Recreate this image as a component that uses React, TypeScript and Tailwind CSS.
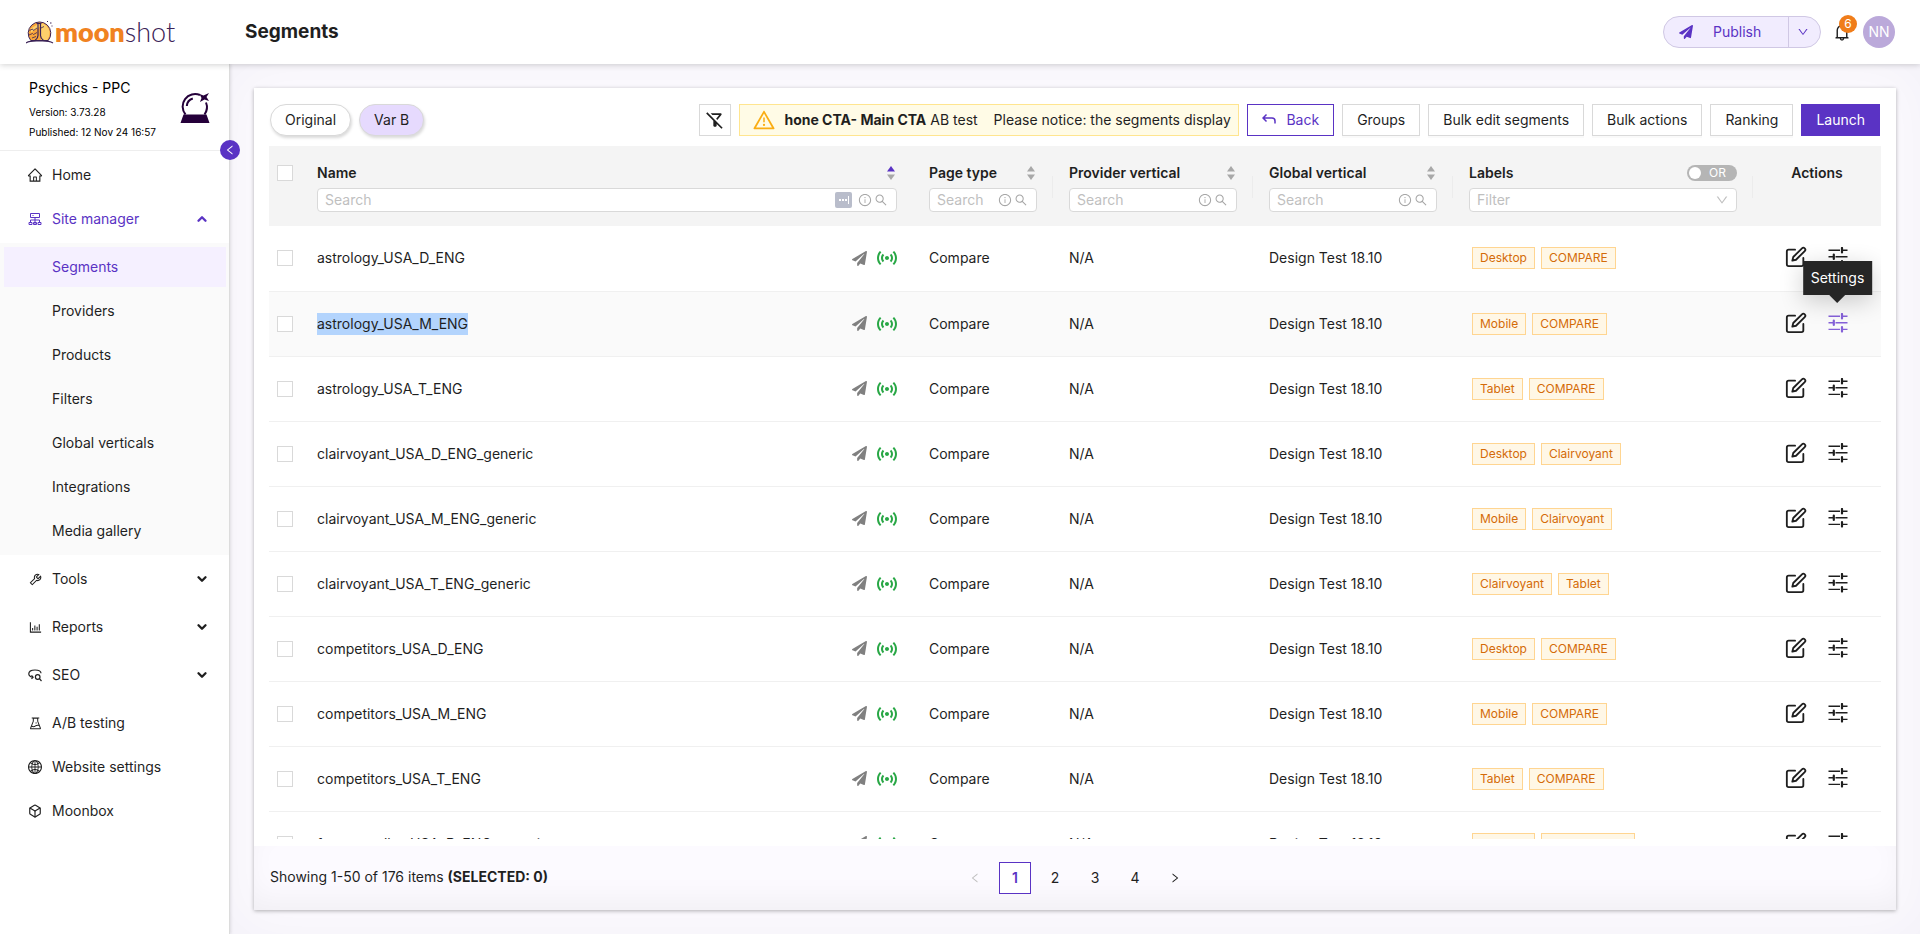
import React, { useState } from 'react';
import {
  AiOutlineBarChart,
  AiOutlineBell,
  AiOutlineDown,
  AiOutlineExperiment,
  AiOutlineGlobal,
  AiOutlineHome,
  AiOutlineInfoCircle,
  AiOutlineLeft,
  AiOutlineRight,
  AiOutlineSearch,
  AiOutlineTool,
  AiOutlineWarning,
} from 'react-icons/ai';
import { FaPaperPlane } from 'react-icons/fa';
import { FiBox, FiChevronDown, FiEdit } from 'react-icons/fi';
import { MdOutlineFilterAltOff, MdSensors } from 'react-icons/md';
import clsx from 'clsx';

const siteManagerItems = [
  `Segments`,
  `Providers`,
  `Products`,
  `Filters`,
  `Global verticals`,
  `Integrations`,
  `Media gallery`,
];

const segments = [
  { name: `astrology_USA_D_ENG`, labels: [`Desktop`, `COMPARE`] },
  { name: `astrology_USA_M_ENG`, labels: [`Mobile`, `COMPARE`] },
  { name: `astrology_USA_T_ENG`, labels: [`Tablet`, `COMPARE`] },
  { name: `clairvoyant_USA_D_ENG_generic`, labels: [`Desktop`, `Clairvoyant`] },
  { name: `clairvoyant_USA_M_ENG_generic`, labels: [`Mobile`, `Clairvoyant`] },
  { name: `clairvoyant_USA_T_ENG_generic`, labels: [`Clairvoyant`, `Tablet`] },
  { name: `competitors_USA_D_ENG`, labels: [`Desktop`, `COMPARE`] },
  { name: `competitors_USA_M_ENG`, labels: [`Mobile`, `COMPARE`] },
  { name: `competitors_USA_T_ENG`, labels: [`Tablet`, `COMPARE`] },
  { name: `fortune_teller_USA_D_ENG_generic`, labels: [`Desktop`, `Fortune Teller`] },
];

const ACTIVE_ROW = 1;

const Logo = () => (
  <a href="#home" className="flex items-center" aria-label="moonshot">
    <svg width="28" height="24" viewBox="0 0 28 24" fill="none" aria-hidden="true">
      <path
        d="M4.8 20.5A11.3 11.3 0 1 1 22.2 20.5Z"
        fill="#f9a63a"
        stroke="#3b2357"
        strokeWidth="1"
      />
      <path d="M15 3c5 1 8.500 5 8.500 10 0 3-1 5-2.500 7h-6Z" fill="#fdd06b" />
      <path d="M5 8.500l8-5 1 3-9 6Z" fill="#fdd06b" />
      <path
        d="M10.500 3.500h5M12 3.500v12c0 2-1 3.500-3 5M14.500 3.500v12c0 2 1 3.500 3 5"
        stroke="#3b2357"
        strokeWidth="1.2"
      />
      <path
        d="M3.500 10.500l3-1.500 1 1.500 3.500-2.500M3 15l3.500-1.500 1 1 3.500-2M6 18l4-1.500M15 8l3-1.500"
        stroke="#3b2357"
        strokeWidth=".8"
      />
      <path d="M0 23c4-2.500 8-2 13.500-2s9-.5 13.500 2" stroke="#3b2357" strokeWidth="1.2" />
      <path d="M24 3h1.500M25.500 6h1M21 1.500h1" stroke="#3b2357" />
    </svg>
    <span className="ml-px font-['Lato',sans-serif] text-[27px] leading-8 font-extrabold text-[#f08221]">
      moon
    </span>
    <span className="font-['Lato',sans-serif] text-[27px] leading-8 font-light text-[#3b2357]">
      shot
    </span>
  </a>
);

const CrystalBall = () => (
  <svg width="30" height="32" viewBox="0 0 30 32" fill="none" aria-hidden="true">
    <path
      d="M5.500 22.500a12.500 12.500 0 0 1 14.500-19.500M26 10.500a12.500 12.500 0 0 1-1.500 12"
      stroke="#25003a"
      strokeWidth="2"
    />
    <path d="M6.800 14a8.500 8.500 0 0 1 6-7.500" stroke="#25003a" strokeWidth="2" />
    <path d="M3.500 22.500h23l3 8.500h-29Z" fill="#25003a" />
    <path d="M19.500 2l4 1.500L29 1l-2.500 4 2.500 4-4.500-1.500L20 10l1.500-4Z" fill="#25003a" />
  </svg>
);

const SiteManagerIcon = () => (
  <svg width="14" height="14" viewBox="0 0 14 14" fill="none" stroke="currentColor" aria-hidden="true">
    <path d="M2.500 1.500h9v4h-9zM7 5.500V13M2.500 10V8h9v2M1 10.500h3v2H1zM5.500 10.500h3v2h-3zM10 10.500h3v2h-3zM4.500 3.500h1" />
  </svg>
);

const SeoIcon = () => (
  <svg width="14" height="14" viewBox="0 0 14 14" fill="none" stroke="currentColor" strokeWidth="1.2" aria-hidden="true">
    <path d="M4.500 9.200C2.200 8.700.8 7.300.8 5.700.8 3.500 3.200 2 7 2s6 1.300 6 3.200" />
    <circle cx="9.700" cy="9" r="2.300" />
    <path d="M11.400 10.700l2.100 2.300M3.500 7.300l1.600 1.900-1.600 1.600" />
  </svg>
);

const BackIcon = () => (
  <svg width="14" height="14" viewBox="0 0 14 14" fill="none" stroke="currentColor" strokeWidth="1.5" aria-hidden="true">
    <path d="M4.500 1.500L1 5l3.500 3.500M1 5h9a3 3 0 0 1 3 3v2.500" />
  </svg>
);

const SlidersIcon = () => (
  <svg width="20" height="20" viewBox="0 0 20 20" fill="none" stroke="currentColor" aria-hidden="true">
    <path
      d="M.5 3.200h11.500M14 3.200h5.500M.5 9.800h5M7.500 9.800h12M.5 16.400h11.500M14 16.400h5.500"
      strokeWidth="1.4"
    />
    <path
      d="M14 1v4.400M5.800 7.600V12M14 14.200v4.400"
      strokeWidth="2.200"
      strokeLinecap="round"
    />
  </svg>
);

const Sorter = ({ active = false }) => (
  <svg width="10" height="14" viewBox="0 0 10 14" aria-hidden="true">
    <path d="M5 0l4 5.500H1z" fill={active ? `#5a33c4` : `#a8a8a8`} />
    <path d="M5 14l4-5.500H1z" fill="#a8a8a8" />
  </svg>
);

const Header = () => (
  <header className="relative z-20 flex h-16 shrink-0 items-center bg-white pr-[25px] pl-[26px] shadow-[0_1px_6px_rgba(0,0,0,0.18)]">
    <div className="w-[219px] shrink-0">
      <Logo />
    </div>
    <h1 className="flex-1 text-[19px] font-bold">Segments</h1>
    <div className="flex h-8 overflow-hidden rounded-full border border-[#d0c8e4] bg-[#f1ecfe] text-[#5a33c4]">
      <button type="button" className="flex w-[124px] items-center pl-[15px]">
        <FaPaperPlane size={14} />
        <span className="ml-5">Publish</span>
      </button>
      <button
        type="button"
        aria-label="More publish options"
        className="flex w-8 items-center border-l border-[#d0c8e4] pl-2"
      >
        <AiOutlineDown size={12} />
      </button>
    </div>
    <button type="button" aria-label="Notifications" className="relative ml-2.5 p-px">
      <AiOutlineBell size={20} />
      <span className="absolute -top-1.5 left-2 flex size-[18px] items-center justify-center rounded-full bg-[#f07d1a] text-xs leading-none text-white">
        6
      </span>
    </button>
    <span className="ml-2.5 flex size-8 items-center justify-center rounded-full bg-[#bba9da] text-white">
      NN
    </span>
  </header>
);

const menuItem = `flex h-10 w-full items-center gap-[9px] pr-5 pl-[27px] text-left`;

const MenuIcon = ({ children }: { children: React.ReactNode }) => (
  <span className="flex w-4 justify-center">{children}</span>
);

const Sidebar = () => {
  const [open, setOpen] = useState(true);

  return (
    <aside className="relative z-10 flex w-[230px] shrink-0 flex-col border-r border-[#dcdcdc] bg-white shadow-[1px_0_3px_rgba(0,0,0,0.1)]">
      <div className="flex h-[87px] items-start justify-between border-b border-[#eeeeee] pt-3 pr-[19px] pl-[29px] text-black">
        <div>
          <p className="leading-6">Psychics - PPC</p>
          <p className="mt-0.5 text-[10px] leading-5">Version: 3.73.28</p>
          <p className="text-[10px] leading-5">Published: 12 Nov 24 16:57</p>
        </div>
        <div className="pt-4">
          <CrystalBall />
        </div>
      </div>
      <button
        type="button"
        aria-label="Collapse menu"
        className="absolute top-[76px] -right-[11px] flex size-5 items-center justify-center rounded-full bg-[#5a33c4] text-white"
      >
        <AiOutlineLeft size={12} />
      </button>
      <nav aria-label="Main">
        <a href="#home" className={clsx(menuItem, `mt-1`)}>
          <MenuIcon>
            <AiOutlineHome size={16} />
          </MenuIcon>
          Home
        </a>
        <button
          type="button"
          onClick={() => setOpen(!open)}
          className={clsx(menuItem, `my-1 text-[#5a33c4]`)}
        >
          <MenuIcon>
            <SiteManagerIcon />
          </MenuIcon>
          <span className="flex-1">Site manager</span>
          <FiChevronDown size={14} strokeWidth={4} className={clsx(open && `rotate-180`)} />
        </button>
        {open && (
          <div className="flex flex-col gap-1 bg-[#fafafa] py-1">
            {siteManagerItems.map((item, i) => (
              <a
                key={item}
                href={`#${item}`}
                className={clsx(
                  `mr-[3px] ml-1 flex h-10 items-center pl-12`,
                  i === 0 && `bg-[#f5f0ff] text-[#5a33c4]`
                )}
              >
                {item}
              </a>
            ))}
          </div>
        )}
        <button type="button" className={clsx(menuItem, `my-1`)}>
          <MenuIcon>
            <AiOutlineTool size={15} />
          </MenuIcon>
          <span className="flex-1">Tools</span>
          <FiChevronDown size={14} strokeWidth={4} />
        </button>
        <button type="button" className={clsx(menuItem, `my-2`)}>
          <MenuIcon>
            <AiOutlineBarChart size={15} />
          </MenuIcon>
          <span className="flex-1">Reports</span>
          <FiChevronDown size={14} strokeWidth={4} />
        </button>
        <button type="button" className={clsx(menuItem, `my-2`)}>
          <MenuIcon>
            <SeoIcon />
          </MenuIcon>
          <span className="flex-1">SEO</span>
          <FiChevronDown size={14} strokeWidth={4} />
        </button>
        <a href="#ab-testing" className={menuItem}>
          <MenuIcon>
            <AiOutlineExperiment size={15} />
          </MenuIcon>
          A/B testing
        </a>
        <a href="#website-settings" className={clsx(menuItem, `my-1`)}>
          <MenuIcon>
            <AiOutlineGlobal size={16} />
          </MenuIcon>
          Website settings
        </a>
        <a href="#moonbox" className={menuItem}>
          <MenuIcon>
            <FiBox size={14} />
          </MenuIcon>
          Moonbox
        </a>
      </nav>
    </aside>
  );
};

const ToolbarButton = ({ children }: { children: React.ReactNode }) => (
  <button
    type="button"
    className="h-8 shrink-0 border border-[#d9d9d9] bg-white px-3.5 shadow-[0_2px_0_rgba(0,0,0,0.02)]"
  >
    {children}
  </button>
);

const Toolbar = () => (
  <div className="mx-px flex h-8 items-center gap-2">
    <button
      type="button"
      className="h-8 rounded-full border border-[#d9d9d9] bg-white px-3.5 shadow-[1px_2px_3px_rgba(0,0,0,0.15)]"
    >
      Original
    </button>
    <button
      type="button"
      className="h-8 rounded-full border border-[#d9d9d9] bg-[#e6dafe] px-3.5 shadow-[1px_2px_3px_rgba(0,0,0,0.15)]"
    >
      Var B
    </button>
    <div className="flex-1" />
    <button
      type="button"
      aria-label="Clear filters"
      className="flex size-8 items-center justify-center border border-[#d9d9d9]"
    >
      <MdOutlineFilterAltOff size={20} />
    </button>
    <div
      role="alert"
      className="flex h-8 w-[500px] items-center border border-[#ffe58f] bg-[#fffbe6] pr-1 pl-3"
    >
      <AiOutlineWarning size={24} className="shrink-0 text-[#faad14]" />
      <p className="ml-2 flex-1 overflow-hidden whitespace-nowrap">
        <strong className="font-bold">hone CTA- Main CTA</strong> AB test
        <span className="ml-4">Please notice: the segments display</span>
      </p>
    </div>
    <button
      type="button"
      className="flex h-8 items-center border border-[#5a33c4] px-3.5 text-[#5a33c4]"
    >
      <BackIcon />
      <span className="ml-2.5">Back</span>
    </button>
    <ToolbarButton>Groups</ToolbarButton>
    <ToolbarButton>Bulk edit segments</ToolbarButton>
    <ToolbarButton>Bulk actions</ToolbarButton>
    <ToolbarButton>Ranking</ToolbarButton>
    <button type="button" className="h-8 bg-[#5a33c4] px-[15px] text-white">
      Launch
    </button>
  </div>
);

const Checkbox = ({ label }: { label: string }) => (
  <input
    type="checkbox"
    aria-label={label}
    className="block size-4 appearance-none border border-[#d9d9d9] bg-white checked:bg-[#5a33c4]"
  />
);

const SearchBox = ({ label, regex = false }: { label: string; regex?: boolean }) => (
  <div className="flex h-6 items-center rounded border border-[#d9d9d9] bg-white px-[7px] font-normal">
    <input
      type="text"
      aria-label={`Search ${label}`}
      placeholder="Search"
      className="w-0 min-w-0 flex-1 outline-none placeholder:text-[#bfbfbf]"
    />
    {regex && (
      <span className="mr-1.5 flex h-4 w-[17px] items-center justify-center gap-px rounded-xs bg-[#b9bdcb]">
        <i className="size-0.5 bg-white" />
        <i className="size-0.5 bg-white" />
        <i className="size-0.5 bg-white" />
        <i className="h-2 w-px bg-white" />
      </span>
    )}
    <span className="flex gap-0.5 pr-px text-[#a6a6a6]">
      <AiOutlineInfoCircle size={14} />
      <AiOutlineSearch size={14} />
    </span>
  </div>
);

const SearchHeader = ({
  label,
  active = false,
  divider = true,
}: {
  label: string;
  active?: boolean;
  divider?: boolean;
}) => (
  <th className="relative px-4 pt-4 pb-3.5 align-top font-semibold">
    <div className="mb-1 flex h-[22px] items-center justify-between pr-px">
      {label}
      <Sorter active={active} />
    </div>
    <SearchBox label={label} regex={active} />
    {divider && <i className="absolute top-[30px] right-0 h-[22px] w-px bg-[#ececec]" />}
  </th>
);

const Columns = () => (
  <colgroup>
    <col className="w-8" />
    <col />
    <col className="w-[140px]" />
    <col className="w-[200px]" />
    <col className="w-[200px]" />
    <col className="w-[300px]" />
    <col className="w-32" />
  </colgroup>
);

const SegmentsTable = () => (
  <div className="mt-2.5 min-h-0 flex-1 overflow-hidden">
    <table className="w-full table-fixed text-left">
      <Columns />
      <thead className="h-20 bg-[#f4f4f4]">
        <tr>
          <th className="pt-[19px] pl-2 align-top">
            <Checkbox label="Select all" />
          </th>
          <SearchHeader label="Name" active divider={false} />
          <SearchHeader label="Page type" />
          <SearchHeader label="Provider vertical" />
          <SearchHeader label="Global vertical" />
          <th className="relative px-4 pt-4 pb-3.5 align-top font-semibold">
            <div className="mb-1 flex h-[22px] items-center justify-between">
              <span id="labels-heading">Labels</span>
              <button
                type="button"
                role="switch"
                aria-checked="false"
                aria-label="Match all labels"
                className="flex h-4 w-[50px] items-center rounded-full bg-[#b5b5b5] pl-0.5 text-xs font-normal text-white"
              >
                <i className="size-3 rounded-full bg-white" />
                <span className="ml-2">OR</span>
              </button>
            </div>
            <div className="relative">
              <select
                aria-labelledby="labels-heading"
                className="block h-6 w-full appearance-none rounded border border-[#d9d9d9] bg-white px-[7px] font-normal text-[#bfbfbf]"
              >
                <option>Filter</option>
              </select>
              <AiOutlineDown size={14} className="absolute top-[5px] right-2 text-[#bfbfbf]" />
            </div>
            <i className="absolute top-[30px] right-0 h-[22px] w-px bg-[#ececec]" />
          </th>
          <th className="px-4 pt-4 text-center align-top font-semibold">
            <div className="leading-[22px]">Actions</div>
          </th>
        </tr>
      </thead>
      <tbody>
        {segments.map((segment, i) => (
          <tr
            key={segment.name}
            className={clsx(
              `h-[65px] border-b border-[#f0f0f0]`,
              i === ACTIVE_ROW && `bg-[#fafafa]`
            )}
          >
            <td className="pl-2">
              <Checkbox label={`Select ${segment.name}`} />
            </td>
            <td className="px-4">
              <div className="flex items-center justify-between">
                <span className={clsx(`leading-[22px]`, i === ACTIVE_ROW && `bg-[#b3d4fd]`)}>
                  {segment.name}
                </span>
                <span className="flex items-center gap-2">
                  <FaPaperPlane size={15} className="text-[#808080]" />
                  <MdSensors size={24} className="-mr-0.5 text-[#28a745]" />
                </span>
              </div>
            </td>
            <td className="px-4">Compare</td>
            <td className="px-4">N/A</td>
            <td className="px-4">Design Test 18.10</td>
            <td className="px-4">
              <div className="flex gap-1.5 pl-[3px]">
                {segment.labels.map((label) => (
                  <span
                    key={label}
                    className="border border-[#ffd591] bg-[#fff7e6] px-[7px] text-xs leading-5 text-[#d46b08]"
                  >
                    {label}
                  </span>
                ))}
              </div>
            </td>
            <td className="pr-[18px] pb-0.5 pl-4">
              <div className="flex items-center justify-center gap-[21px]">
                <button type="button" aria-label={`Edit ${segment.name}`}>
                  <FiEdit size={22} />
                </button>
                <div className="relative flex">
                  <button
                    type="button"
                    aria-label={`Settings for ${segment.name}`}
                    className={clsx(i === ACTIVE_ROW && `text-[#8561d8]`)}
                  >
                    <SlidersIcon />
                  </button>
                  {i === ACTIVE_ROW && (
                    <div
                      role="tooltip"
                      className="absolute bottom-full left-1/2 mb-[18px] -translate-x-1/2 bg-[#262626] px-2 py-1.5 leading-[22px] text-white shadow-[0_6px_24px_rgba(0,0,0,0.2)]"
                    >
                      Settings
                      <svg
                        width="16"
                        height="8"
                        viewBox="0 0 16 8"
                        className="absolute top-full left-1/2 -translate-x-1/2"
                        aria-hidden="true"
                      >
                        <path d="M0 0h16L8 8z" fill="#262626" />
                      </svg>
                    </div>
                  )}
                </div>
              </div>
            </td>
          </tr>
        ))}
      </tbody>
    </table>
  </div>
);

const Pagination = () => (
  <footer className="relative flex h-16 shrink-0 items-center justify-center bg-[#fcfaff] shadow-[inset_0_-16px_32px_-8px_rgba(0,0,0,0.05)]">
    <p className="absolute top-5 left-4 leading-[22px]">
      Showing 1-50 of 176 items <strong className="font-bold">(SELECTED: 0)</strong>
    </p>
    <nav aria-label="Pagination" className="flex gap-2">
      <button
        type="button"
        disabled
        aria-label="Previous page"
        className="flex size-8 items-center justify-center text-[#bfbfbf]"
      >
        <AiOutlineLeft size={12} />
      </button>
      {[1, 2, 3, 4].map((page) => (
        <button
          key={page}
          type="button"
          className={clsx(
            `size-8`,
            page === 1 && `border border-[#5a33c4] bg-white font-semibold text-[#5a33c4]`
          )}
        >
          {page}
        </button>
      ))}
      <button
        type="button"
        aria-label="Next page"
        className="flex size-8 items-center justify-center"
      >
        <AiOutlineRight size={12} />
      </button>
    </nav>
  </footer>
);

const App = () => (
  <div className="flex h-screen flex-col overflow-hidden bg-white font-[Inter,sans-serif] text-sm text-[#1f1f1f]">
    <Header />
    <div className="flex min-h-0 flex-1">
      <Sidebar />
      <main className="flex min-w-0 flex-1 bg-[#fcfaff] p-6 shadow-[inset_0_0_60px_rgba(30,10,60,0.04)]">
        <section
          aria-label="Segments"
          className="flex min-w-0 flex-1 flex-col bg-white shadow-[0_1px_4px_rgba(0,0,0,0.3)]"
        >
          <div className="flex min-h-0 flex-1 flex-col px-[15px] pt-4 pb-[7px]">
            <Toolbar />
            <SegmentsTable />
          </div>
          <Pagination />
        </section>
      </main>
    </div>
  </div>
);

export default App;
